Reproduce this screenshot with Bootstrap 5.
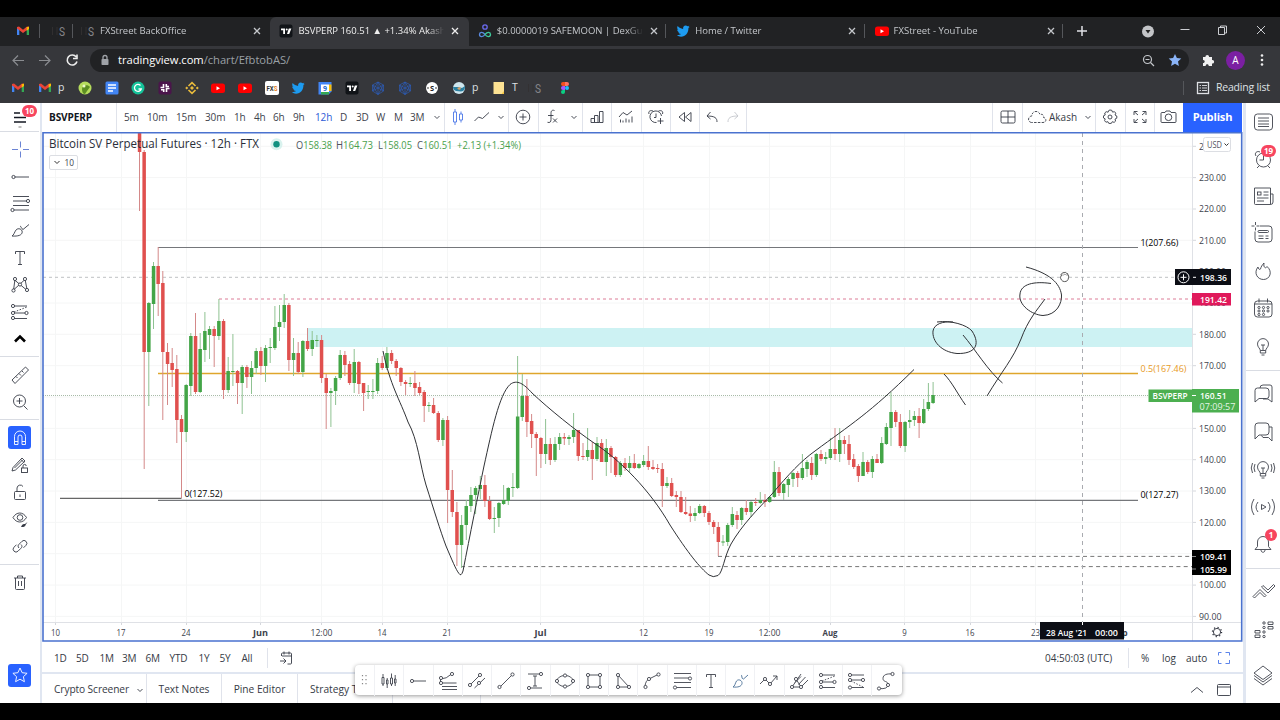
<!DOCTYPE html>
<html lang="en">

<head>
  <meta charset="UTF-8">
  <meta name="viewport" content="width=device-width, initial-scale=1">
  <title>BSVPERP 160.51 ▲ +1.34% Akash</title>
  <link href="https://cdn.jsdelivr.net/npm/bootstrap@5.3.3/dist/css/bootstrap.min.css" rel="stylesheet">
  <style>
    body {
      width: 1280px;
      height: 720px;
      background: #000;
      font-family: "Open Sans", "Noto Sans", sans-serif;
      font-size: 10px;
      line-height: 1.2;
      color: #2a2e39;
    }

    svg { display: block; flex: none; }
    .ic { width: 24px; height: 24px; fill: none; stroke: currentColor; stroke-width: .9; }
    .cell { flex: none; display: flex; align-items: center; white-space: nowrap; }

    /* browser */
    .browser { height: 103px; padding-top: 17px; color: #dfe1e5; }
    .tabs { height: 29px; background: #212224; font-size: 9.5px; padding-bottom: 1px; }
    .tab-item { width: 198.4px; height: 29px; padding: 0 0 1px 4px; position: relative; top: .5px; color: #c4c7cb; }
    .tab-item.on { background: #36373b; border-radius: 6px 6px 0 0; color: #eee; }
    .tab-item:nth-child(n+3)::after { content: ""; position: absolute; right: 1px; top: 7px; width: 1px; height: 14px; background: #55575b; }
    .tab-name { width: 146px; overflow: hidden; white-space: nowrap; }
    .fade-end { -webkit-mask-image: linear-gradient(90deg, #000 130px, transparent 146px); }
    .tabsep { width: 1px; height: 14px; background: #55575b; }
    .addr { height: 28px; background: #36373b; }
    .pill { height: 23px; width: 1099px; border-radius: 12px; background: #212224; font-size: 11.2px; color: #9aa0a6; }
    .marks { height: 29px; background: #36373b; font-size: 10.5px; padding-bottom: 2px; }
    .avatar { width: 19px; height: 19px; border-radius: 50%; background: #7b1fa2; color: #fff; font-size: 10px; }

    /* app */
    .app { height: 600px; background: #e0e6f1; color: #363a45; }
    .tools { width: 40px; padding-right: 1px; background: #fff; }
    .sq { width: 23px; height: 23px; border-radius: 3px; background: #2962ff; color: #fff; }
    .rule { height: 1px; background: #d9dce3; }
    .middle { width: 1201px; margin-left: 2px; }
    .head { height: 29px; background: #fff; }
    .head .cell, .head .times, .head .symbol { padding-bottom: 1px; }
    .bl { border-left: 1px solid #e0e3eb; }
    .br { border-right: 1px solid #e0e3eb; }
    .times { font-size: 10px; letter-spacing: -.15px; color: #40434d; }
    .symbol { width: 75px; padding-left: 7px; font-size: 10.1px; font-weight: 700; color: #131722; letter-spacing: -.15px; }
    .publish { width: 59px; background: #2962ff; color: #fff; font-weight: 700; font-size: 11.1px; letter-spacing: -.2px; padding-bottom: 2px; }
    .times .blue { color: #2d5bd6; }
    .bar { height: 30px; padding-top: 2px; background: #fff; }
    .foot { height: 29px; margin-top: 2px; background: #fff; font-size: 10.2px; white-space: nowrap; }
    .foot > div { padding-top: 2px; }
    .right-tools { width: 34px; margin-left: 3px; background: #fff; color: #40434d; }
    .right-tools .rule { margin: 5px 0; }
    .pin { position: absolute; background: #f7455f; color: #fff; border-radius: 8px; font-size: 8px; font-weight: 700; line-height: 12px; height: 12px; text-align: center; }
    .floating { position: absolute; left: 355px; top: 665px; width: 547px; height: 30px; background: #fff; border-radius: 4px; box-shadow: 0 1px 4px rgba(0, 0, 0, .4); color: #40434d; }
    .floating .cell { height: 31px; width: 29.25px; justify-content: center; border-left: 1px solid #f0f1f4; }
  </style>
</head>

<body class="overflow-hidden position-relative">

  <div class="browser">
    <div class="tabs d-flex align-items-center">
      <div class="cell" style="width:39px;padding-left:11px"><svg data-i="gmail"></svg></div>
      <div class="tabsep"></div>
      <div class="cell" style="width:32px;padding-left:7px"><svg data-i="fxs"></svg></div>
      <div class="tabsep"></div>
      <div id="tabList" class="d-flex" style="margin-left:-1px"></div>
      <div class="cell"><svg data-i="plus" style="margin-left:6px"></svg></div>
      <div class="cell ms-auto" style="width:144px"><svg data-i="tabsearch"></svg><svg data-i="minimize" style="margin-left:13px"></svg><svg data-i="maximize" style="margin:0 14px"></svg><svg data-i="closewin"></svg></div>
    </div>
    <div class="addr d-flex align-items-center">
      <div class="cell" style="width:90px;padding-left:6px"><svg data-i="back"></svg><svg data-i="forward" style="margin-left:3px"></svg><svg data-i="reload" style="margin-left:3px"></svg></div>
      <div class="pill d-flex align-items-center">
        <svg data-i="padlock" style="margin-left:3px"></svg>
        <div class="ms-auto order-2 d-flex" style="margin-right:2px"><svg data-i="zoomout"></svg><svg data-i="star" style="margin-left:3px"></svg></div>
        <div style="margin-left:1px;letter-spacing:-.03px"><span class="text-white">tradingview.com</span>/chart/EfbtobAS/</div>
      </div>
      <svg data-i="puzzle" style="margin-left:7px"></svg>
      <div class="avatar d-flex align-items-center justify-content-center" style="margin-left:6px">A</div>
      <svg data-i="kebab" style="margin-left:5px"></svg>
    </div>
    <div class="marks d-flex align-items-center">
      <div id="bookmarks" class="d-flex align-items-center" style="padding-left:6px"></div>
      <div class="tabsep ms-auto me-2"></div>
      <svg data-i="reading" style="margin-left:-1px"></svg>
      <div style="width:65px;letter-spacing:-.2px;padding-left:1px">Reading list</div>
    </div>
  </div>

  <div class="app d-flex">
    <!-- drawing tools -->
    <div class="tools d-flex flex-column align-items-center position-relative">
      <div class="cell" style="height:28px"><svg data-i="menu"></svg></div>
      <div class="pin" style="left:22px;top:2px;width:15px">10</div>
      <div class="rule w-100" style="margin-bottom:4px"></div>
      <div id="leftTools" class="w-100"></div>
      <div class="sq d-flex align-items-center justify-content-center mt-auto" style="margin-bottom:16.5px"><svg data-i="staro"></svg></div>
    </div>

    <div class="middle d-flex flex-column">
      <div class="head d-flex">
        <div class="symbol br d-flex align-items-center">BSVPERP</div>
        <div class="times br d-flex align-items-center" style="width:328px;padding-left:7px"><div id="times" class="d-flex"></div><svg data-i="chev" style="margin-left:-9px"></svg></div>
        <div id="headIcons" class="d-flex"></div>
        <div id="headRight" class="d-flex ms-auto"></div>
        <div class="publish d-flex align-items-center justify-content-center">Publish</div>
        <div style="width:1px"></div>
      </div>

      <svg id="chart" width="1201" height="510" viewBox="42 132 1201 510"></svg>

      <div class="bar d-flex align-items-center">
        <div id="ranges" class="d-flex align-items-center" style="padding-left:12px;letter-spacing:-.2px"></div>
        <div class="bl d-flex align-items-center" style="height:20px;padding-left:6px;margin-left:3px"><svg data-i="goto"></svg></div>
        <div id="rangeRight" class="d-flex align-items-center ms-auto"></div>
      </div>

      <div class="foot d-flex">
        <div class="br d-flex align-items-center" style="width:105px;padding-left:12px"><span style="width:75px;letter-spacing:-.1px">Crypto Screener</span><svg data-i="chev" style="margin-left:-1px"></svg></div>
        <div class="br d-flex align-items-center justify-content-center" style="width:75px">Text Notes</div>
        <div class="br d-flex align-items-center justify-content-center" style="width:76px">Pine Editor</div>
        <div class="br d-flex align-items-center" style="width:95px;padding-left:12px">Strategy Tester</div>
        <div class="br" style="width:88px"></div>
        <div class="d-flex align-items-center ms-auto" style="padding-right:7px"><svg data-i="up"></svg><svg data-i="window" style="margin-left:3px"></svg></div>
      </div>
    </div>

    <div class="right-tools d-flex flex-column" id="rightTools"></div>
  </div>

  <div class="floating d-flex"><div style="width:19px" class="d-flex align-items-center justify-content-center"><svg data-i="grip"></svg></div><div id="favs" class="d-flex"></div></div>

  <script>
    // small ring used as the handle of drawing tools
    const o = (x, y) => `<circle cx="${x}" cy="${y}" r="1.6" fill="#fff"/>`;
    const bird = '<path fill="#1d9bf0" stroke="none" d="M6 16c2 0 3-.3 4-1-1.500 0-2.300-.8-2.600-1.700h1.200C7 13 6.200 12 6.200 10.500l1.200.3C6 9.700 5.900 8.300 6.700 7c1.500 1.700 3.200 2.700 5.400 2.900C11.800 7.800 13 6.500 14.600 6.500c.8 0 1.500.3 2 .8l1.700-.6-1 1.500 1.500-.4-1.400 1.500C17.500 14 14.500 17.700 10 17.700 8.500 17.700 7 17.200 6 16z"/>';
    const tube = '<rect x="5" y="7.500" width="14" height="9.500" rx="2.500" fill="#f00" stroke="none"/><path d="M10.500 10.200v4l3.500-2z" fill="#fff" stroke="none"/>';
    const tv = '<rect x="5.500" y="5.500" width="13" height="13" rx="2" fill="#111418" stroke="none"/><path fill="#fff" stroke="none" d="M7 9.500h4v5.500H9.200v-3.700H7zM14.800 9.500h2.600L15.200 15h-2.200z"/><circle cx="12.700" cy="10.500" r="1" fill="#fff" stroke="none"/>';
    const hex = '<path stroke="#2c5cb8" d="M12 6l5.500 3v6L12 18.500 6.500 15V9zM6.500 9l11 6m0-6l-11 6M12 6v12.500M12 6l-5.500 9M12 6l5.500 9M12 18.500L6.500 9M12 18.500L17.500 9" stroke-width=".7"/>';
    const bulb = '<path d="M9.300 16.500c0-2-2.800-3.200-2.800-6.400a5.500 5.500 0 0 1 11 0c0 3.200-2.800 4.400-2.800 6.400zM9.300 16.500v2.500h5.400v-2.500M10.500 21h3M12 16v-5m-2 0h4"/>';
    const brush = '<path d="M4 17c2-1 2.200-3.500 4-6 2-2.500 6.500-1 6.200 2.200-.3 3-4.200 4.300-10.200 3.800zM12 7c1 0 1.500 3 3 3.500l6-5"/>';
    const brush2 = '<path d="M5 18c2-1 2-3.500 3.500-6 2-2.500 6-.5 5.500 2.500S10 18.500 5 18zM13 6c1.500 0 0 4 2.500 4L20 6"/>';
    const tee = '<path d="M7.500 8V5.500h9V8M12 5.500v13M10 18.500h4"/>';
    const forecast = '<path d="M5 6h14M6 13h12M5 18.500h14"/><path d="M6 12l13-5" stroke-dasharray="1.500 1.500"/>' + o(5, 6) + o(5, 13) + o(18.500, 13) + o(5, 18);

    const icons = {
      gmail: '<g stroke="none"><path fill="#4285f4" d="M6 8.500h2.300V16H6z"/><path fill="#34a853" d="M15.700 8.500H18V16h-2.300z"/><path fill="#ea4335" d="M6 8l2-.5 4 3.200 4-3.200 2 .5v1.500l-6 4.500-6-4.500z"/><path fill="#fbbc04" d="M15.700 8.200L18 7.500V10l-2.300 1.700z"/></g>',
      fxs: '<text x="12" y="16.500" font-size="13" font-family="Roboto" textLength="6" lengthAdjust="spacingAndGlyphs" fill="#85868a" stroke="none">S</text><path d="M5.500 8v8M10 8v8" stroke="#333132"/>',
      tv, bird, tube, hex,
      safe: '<circle cx="12" cy="8" r="2.200" stroke="#6b6bf0" stroke-width="1.300"/><path stroke="#5a8ae0" stroke-width="1.300" d="M12 15.500c-2 3-5.500 2.500-5.500 0s3-3 5.500 0"/><path stroke="#3fc99a" stroke-width="1.300" d="M12 15.500c2 3 5.500 2.500 5.500 0s-3-3-5.500 0"/>',
      close: '<path d="M9 9l6 6m0-6l-6 6" stroke-width="1.300"/>',
      plus: '<path d="M12 7v10M7 12h10" stroke-width="1.500"/>',
      tabsearch: '<circle cx="12" cy="12.500" r="6" fill="#c3c5c8" stroke="none"/><path d="M9.500 11h5L12 14.500z" fill="#222" stroke="none"/>',
      minimize: '<path d="M7.500 10.500h9"/>',
      maximize: '<path d="M7.500 8.500h6v7h-6zM9.500 8.500v-1.500h6v7h-2"/>',
      closewin: '<path d="M8 7l8 8m0-8l-8 8"/>',
      back: '<path stroke="#8a8c90" d="M18 12.500H7m5-5l-5 5 5 5" stroke-width="1.200"/>',
      forward: '<path stroke="#8a8c90" d="M6 12.500h11m-5-5l5 5-5 5" stroke-width="1.200"/>',
      reload: '<path stroke="#eee" stroke-width="1.600" d="M16.200 9A5 5 0 1 0 17 13.500M17 6.500v4h-4"/>',
      padlock: '<rect x="8.500" y="11" width="7" height="6" rx=".8" fill="#a0a3a8" stroke="none"/><path stroke="#a0a3a8" stroke-width="1.300" d="M10 11V9.500a2 2 0 0 1 4 0V11"/>',
      zoomout: '<circle cx="11.500" cy="11.500" r="4" stroke="#c4c7cb" stroke-width="1.200"/><path stroke="#c4c7cb" stroke-width="1.200" d="M9.500 11.500h4m1 3l3.500 3.500"/>',
      star: '<path fill="#8ab4f8" stroke="none" d="M12 6l1.900 4.100 4.400.5-3.300 3 .9 4.400-3.900-2.200L8.100 18l.9-4.400-3.300-3 4.400-.5z"/>',
      puzzle: '<path fill="#f1f1f1" stroke="none" d="M7 9h2.500c-.5-2.800 4-2.800 3.500 0h3v3c2.800-.5 2.800 4 0 3.500V18h-3.300c.3-2.500-3.300-2.500-3 0H7v-3c2.300.2 2.300-3.200 0-3z"/>',
      kebab: '<g fill="#eee" stroke="none"><circle cx="12" cy="7.500" r="1.300"/><circle cx="12" cy="12" r="1.300"/><circle cx="12" cy="16.500" r="1.300"/></g>',
      reading: '<rect x="6.500" y="6.500" width="11" height="11" stroke-width="1.300"/><path d="M8.500 9.500h1.500m1 0h5M8.500 12h1.500m1 0h5M8.500 14.500h1.500m1 0h5"/>',
      frog: '<circle cx="12" cy="12" r="6.500" fill="#b5dc5c" stroke="none"/><path d="M9 13c0-4 6-5 8-2l-3 4-2 3c-2 0-3-2-3-5z" fill="#5c8e23" stroke="none"/><circle cx="11" cy="10" r="1.500" fill="#eaf7c5" stroke="none"/>',
      docs: '<rect x="5.500" y="5.500" width="13" height="13" rx="1.500" fill="#4285f4" stroke="none"/><path stroke="#fff" stroke-width="1.300" d="M8 9h8m-8 3h8m-8 3h5"/>',
      gram: '<circle cx="12" cy="12" r="6.500" fill="#15c39a" stroke="none"/><path stroke="#fff" stroke-width="1.300" d="M14.500 9.500a3.500 3.500 0 1 0 .8 3.500H12.500"/>',
      slack: '<rect x="5.500" y="5.500" width="13" height="13" rx="2" fill="#4a154b" stroke="none"/><path stroke="#fff" stroke-width="1.600" d="M10.500 8v3.500H7.500M13.500 16v-3.500h3M16 10.500h-2.700V8M8 13.700h2.700V16"/>',
      binance: '<path stroke="#e8ba3c" stroke-width="1.700" d="M8.500 10L12 6.700l3.500 3.300M8.500 14l3.500 3.300 3.500-3.300"/><path fill="#e8ba3c" stroke="none" d="M12 10l2 2-2 2-2-2zM6.700 10.500l1.500 1.500-1.500 1.500L5.200 12zM17.300 10.500l1.500 1.500-1.500 1.500-1.500-1.500z"/>',
      fxsq: '<rect x="5" y="5" width="14" height="14" rx="2" fill="#fff" stroke="none"/><text x="6.500" y="15" font-size="8" font-weight="700" font-family="Roboto" textLength="11" lengthAdjust="spacingAndGlyphs" fill="#333" stroke="none">FX<tspan fill="#e8821e">S</tspan></text>',
      cal: '<path d="M5.500 6h13v9.500l-3 3h-10z" fill="#4285f4" stroke="none"/><path d="M16 8.500h2.500V15H16z" fill="#fbbc04" stroke="none"/><path d="M8 16h8v2.500H8z" fill="#34a853" stroke="none"/><rect x="8" y="8.500" width="8" height="7.500" fill="#fff" stroke="none"/><text x="10" y="15" font-size="7" font-weight="700" fill="#1967d2" stroke="none">9</text>',
      coin: '<circle cx="12" cy="12" r="6" fill="#fff" stroke="none"/><text x="9.900" y="14.700" font-size="7.500" font-weight="700" fill="#222" stroke="none">S</text><path d="M7 12h2m6 0h2" stroke="#222"/>',
      globe: '<circle cx="12" cy="12" r="6" fill="#cfe6ee" stroke="none"/><path fill="#2a7fa0" stroke="none" d="M6 11h5l4 1 3-2c0 4-1 5-4 5.500L9 15c-2-1-3-2-3-4z"/><path fill="#d9a066" stroke="none" d="M10 12l3-1 1 2-2 1z"/>',
      note: '<path fill="#fde293" stroke="none" d="M6.500 6h10.500v12H6.500z"/><path fill="#f5c542" stroke="none" d="M14.500 18l2.500-3v3z"/>',
      figma: '<g stroke="none"><path d="M12 6v4h-2a2 2 0 0 1 0-4z" fill="#f24e1e"/><path d="M12 6h2a2 2 0 0 1 0 4h-2z" fill="#ff7262"/><path d="M12 10v4h-2a2 2 0 0 1 0-4z" fill="#a259ff"/><circle cx="14" cy="12" r="2" fill="#1abcfe"/><path d="M12 14v2a2 2 0 1 1-2-2z" fill="#0acf83"/></g>',

      menu: '<path stroke="#131722" stroke-width="1.300" d="M6 8h6M6 12.500h12M6 17h12"/><path d="M10.500 22h3" stroke="#aaa" stroke-width="1.500"/>',
      cross: '<path stroke="#5a76cf" d="M12.500 3.500v6m0 4v6M4 11.500h6m5 0h6"/>',
      hline: '<path d="M5 12h16"/>' + o(5.500, 12),
      fib: '<path d="M5 4.500h16M5 9h14M5 13.500h16M5 18h16"/>' + o(20, 9) + o(4.500, 18),
      brush, brush2, tee,
      tri: '<path d="M6 6.500l12 10M17 6.500L6 16.500M7 6l-1.500 11.500M17 6l2 10.500"/>' + o(7, 6) + o(17, 6) + o(12, 11.500) + o(5.500, 17.500) + o(19, 17),
      forecast,
      caret: '<path stroke="#000" stroke-width="2.600" d="M7 14.500l5-5 5 5"/>',
      ruler: '<path d="M4 17L17.500 4l3 3L7 20.500zM8 13.500l1.500 1.500M11 10.500l2 2M14 8l1.500 1.500"/>',
      zoomin: '<circle cx="11.500" cy="11" r="6"/><path d="M8.500 11h6m-3-3v6m4.500 2l3.500 3.500"/>',
      magnet: '<path d="M6.500 18.500v-8a5.500 5.500 0 0 1 11 0v8h-3.500v-7.500a2 2 0 0 0-4 0v7.500zM6.500 15.500h3.500m4 0h3.500"/>',
      penlock: '<path d="M5 14.500L14 5l3 3-9.500 9-3.500 1zM13 6.500l3 3M6.500 15l8-8"/><rect x="13.500" y="15" width="6" height="4.500" fill="#fff"/><path d="M15 15v-2a1.600 1.600 0 0 1 3.200 0"/>',
      lock: '<rect x="6.500" y="11.500" width="11" height="8" rx="1"/><path d="M9 11.500V8a3.300 3.300 0 0 1 6-1.500M12 14.500v2.500"/>',
      eye: '<path d="M5 10.500c3.500-6 10-6 13.500 0-3.500 6-10 6-13.500 0z"/><circle cx="12" cy="10.500" r="2.800"/><path fill="currentColor" stroke="none" d="M13 20c1-2.500 2-3.500 4-3l2.500-2-2 3c0 1.500-2 2.200-4.500 2z"/>',
      link: '<path d="M11 14c-1.500-1.500-1-2.700 0-3.700l3-3a2.800 2.800 0 0 1 4 4l-2.500 2.500M13 10.500c1.500 1.500 1 2.700 0 3.700l-3 3a2.800 2.800 0 0 1-4-4l2.500-2.500"/>',
      trash: '<path d="M6 8h12M7.500 8v10.500q0 1 1 1h7q1 0 1-1V8M9.500 8v-2h5v2M10.500 11v5m3-5v5"/>',
      staro: '<path stroke="#fff" d="M12 5l2.100 4.700 5 .6-3.700 3.400 1 5-4.400-2.500-4.400 2.500 1-5-3.700-3.400 5-.6z"/>',

      chev: '<path d="M9.500 11l2.500 2.500L14.500 11"/>',
      candles: '<path stroke="#4a76e8" d="M7.500 7h3v10h-3zM9 4v3m0 10v3M13.500 9h3v6h-3zM15 6.500V9m0 6v2.500"/>',
      line: '<path d="M4.500 16l4-4 4 1.500L19 7.500"/>',
      compare: '<circle cx="12" cy="12" r="6.800"/><path d="M12 8.500v7M8.500 12h7"/>',
      fx: '<path d="M14.500 5.500c-3-1-3.500 1-3.500 3v6c0 2.500-1 3.500-3.500 2.800M8 10.500h5.500M13 13.500l4 4m0-4l-4 4"/>',
      bars: '<path d="M6 17.500v-4h3.500v4zM9.500 17.500v-7H13v7zM14.500 17.500V6.500H18v11zM13 17.500h1.500"/>',
      indic: '<path d="M5 12l4-4.500 4 2.500 5-4M6.500 17.500v-3M9 17.500v-2M12 17.500v-4M15 17.500v-3M18 17.500v-6"/>',
      alarm: '<path d="M17.500 11a5.800 5.800 0 1 0-5 6.500M12 8.500v4h-2M5 9c-1-3 1.500-4 4-3M18.500 9c1-3-1.500-4-4-3M16.500 13v6m-3-3h6"/>',
      rewind: '<path d="M11.500 7.500v9L6 12zM18 7.500v9L12.500 12z"/>',
      undo: '<path d="M17 17c0-4-2-6-10-6m3.500-4L7 11l3.500 3"/>',
      redo: '<path stroke="#c4c6cc" d="M7 17c0-4 2-6 10-6m-3.500-4L17 11l-3.500 3"/>',
      layout: '<rect x="5" y="6" width="14" height="12" rx="1.500"/><path d="M12 6v12m-7-6h14"/>',
      cloud: '<path stroke-dasharray="2.500 1.300" d="M6.500 17.500c-4-.5-4-6 .3-6.500 0-5.500 7-6 8.200-1.500 3-1 4 1.500 3.500 3 3.500.5 3 5-.5 5z"/>',
      gear: '<path d="M12 5l1.800.3.700 1.800 2-.4 1.300 1.500-.8 1.800 1.800 1v2.200l-1.800.9.600 2-1.500 1.300-1.800-.7-1 1.700h-2.500l-.9-1.700-2 .5-1.300-1.500.6-1.800L5.500 13v-2.200l1.700-.8-.5-2L8.200 6.700l1.900.5.700-1.800z"/><circle cx="12" cy="12" r="2"/>',
      full: '<path d="M6 10V6.500h3.500M6.500 7l3.500 3M14.500 6.500H18V10M17.500 7L14 10M6 14v3.500h3.500M6.500 17l3.500-3M18 14v3.500h-3.500M17.500 17L14 14"/>',
      camera: '<path d="M4 8.500q0-1 1-1h3l1-1.500h4l1 1.500h4q1 0 1 1v8q0 1-1 1H5q-1 0-1-1z"/><circle cx="11.500" cy="12.300" r="3.300"/>',
      goto: '<path d="M7.500 10V8q0-1 1-1h8q1 0 1 1v9q0 1-1 1h-3M8 10h9.500M10 5.500v3m5-3v3M6 15h6m-2.500-2.500L12 15l-2.500 2.500"/>',
      snap: '<path stroke="#4a76e8" d="M6.500 9.500v-3h3m4 0h4v3m0 4.500v3.500h-4m-4 0h-3V14"/>',
      up: '<path d="M6 14.500l6-5 6 5"/>',
      window: '<rect x="5.500" y="6.500" width="13" height="11" rx="1"/><path d="M5.500 9h13"/>',

      list: '<rect x="3.500" y="4" width="18" height="16" rx="3"/><path d="M7 8h11M7 11h11M7 14h11M7 16.500h11"/>',
      clock: '<circle cx="12.500" cy="13" r="7"/><path d="M12.500 9v4h-4M5 9c-2-3 1-5.500 4-4M8 19l-2 2m11-2l2 2"/>',
      news: '<path d="M3.500 4h16v16.500h-15q-1 0-1-1zM19.500 10h2.500v8q0 2.500-2.500 2.500M12.500 8h5m-5 3h5M6 14h11.500M6 17h7"/><rect x="6.500" y="8" width="3.500" height="3"/>',
      data: '<path d="M9 4h9q3 0 3 3v10q0 3-3 3h-11q-3 0-3-3V9.500M4.500 0v3m0 2.500v3M.5 4h3m2 0h3M8 8.500h8.500q1 0 1 1t-1 1H8q-1 0-1-1t1-1zM7.500 14h5m2 0h3M7.500 16.500h5m2 0h3"/>',
      flame: '<path d="M7 8c0 2 2 3 2.500 2C10 8 11 6 13 4c-.5 3 0 4 1.500 5L16 7.500c6 5 3 13-3.500 13S2.500 13.500 7 8z"/>',
      calendar: '<rect x="3.500" y="4" width="17.500" height="16" rx="3"/><path d="M8 1.500v4M16.500 1.500v4M3.500 7h17.500"/><circle cx="8" cy="10.500" r="1.100"/><circle cx="12.500" cy="10.500" r="1.100"/><circle cx="17" cy="10.500" r="1.100"/><circle cx="8" cy="14" r="1.100"/><circle cx="12.500" cy="14" r="1.100"/><circle cx="17" cy="14" r="1.100"/><circle cx="8" cy="17.500" r="1.100"/><circle cx="12.500" cy="17.500" r="1.100"/>',
      bulb,
      chats: '<path d="M9 6q0-3 3-3h7q2 0 2 2v15l-4-3h-5M9 6h6q3 0 3 3v5q0 2.500-2.500 2.500H8L4 20V8.500q0-2.500 2.500-2.500z"/>',
      chat: '<path d="M4 19V6q0-3 3-3h8q3 0 3 3v6q0 3-3 3H8zM18 7h3v14l-3.500-3.500H12l-1.500-2"/>',
      waves: bulb + '<path d="M4 7q-2 4 0 8M1.500 6q-2.500 5 0 10M20 7q2 4 0 8M22.500 6q2.500 5 0 10"/>',
      stream: '<path d="M10.500 9.500v5l4.500-2.500zM7 7q-4 5 0 10M3 4q-5 8 0 16M17 7q4 5 0 10M21 4q5 8 0 16"/>',
      bell: '<path d="M4 17.500l2.500-3V10a5.500 5.500 0 0 1 11 0v4.500l2.500 3zM10 18c0 3 4 3 4 0"/>',
      zig: '<path d="M2 16.500l7-7 6 6-1.500 1.500L9 12.500 3.500 18zM10.500 7L12 5.500l5 4.500 5.500-5.500L24 6l-7 7z"/>',
      dots: '<path d="M4 12.500h5v2.500H4zM4 17h5v2.500H4zM17 4h5v2.500h-5zM17 8.500h5V11h-5z"/><circle cx="13" cy="5" r="1.200"/><circle cx="13" cy="9.500" r="1.200"/><circle cx="13" cy="14" r="1.200"/><circle cx="13" cy="18.500" r="1.200"/>',
      layers: '<path d="M12 3l9 7-9 6.500L3 10zM3 12.500l9 6.500 9-6.500M3 15.500L12 22l9-6.500"/>',

      grip: '<path stroke="#888" stroke-width="1.200" stroke-dasharray="1.200 2.800" d="M9.500 7v10M13 7v10"/>',
      f1: '<path d="M5 8.500h2V15H5zM6 5v3.500M6 15v2M9.500 11h1.500v4H9.500zM10.200 9v2m0 4v4M13.500 9h2v6h-2zM14.500 4.500V9m0 6v2M17.500 10h1.500v4h-1.500zM18.200 6v4m0 4v3"/>',
      f2: '<path d="M5 12h15"/>' + o(6, 12),
      f3: '<path d="M4.500 14h16M6 17.500h15M6 20.500h15M4.500 10q6 0 11-5M4.500 10v4"/>' + o(16, 5) + o(5, 9) + o(5, 14),
      f4: '<path d="M5 16L15 6M9.500 19L20 9"/>' + o(5, 16) + o(15, 6) + o(14, 14),
      f5: '<path d="M6 18L18 6"/>' + o(5.500, 18) + o(18.500, 5.500),
      f6: '<path d="M5 5h12M5 19h14M12 7v10M10 7h4m-4 10h4"/>' + o(18, 5) + o(6, 19),
      f7: '<ellipse cx="12" cy="12" rx="8" ry="5.500"/>' + o(4, 12) + o(20, 12) + o(12, 6.500) + o(12, 17.500),
      f8: '<path d="M6 6h12v12H6z"/>' + o(6, 6) + o(18, 6) + o(6, 18) + o(18, 18),
      f9: '<path d="M7 6v12h11z"/>' + o(7, 6) + o(7, 18) + o(18, 18),
      f10: '<path d="M5 18q0-7 6-9l8-4"/>' + o(5.500, 18) + o(9, 10) + o(18.500, 5.500),
      f11: '<path d="M4 4.500h17M4 9h15M4 13.500h17M5 18.500h16"/>' + o(20, 9.500) + o(5, 18.500),
      f12: tee,
      f13: '<g stroke="#4a6f96">' + brush2 + '</g>',
      f14: '<path d="M3 15l5-5 5 5 7-8m-4 0h4v4"/>' + o(8, 10) + o(13, 15),
      f15: '<path d="M5 18h9M5 18L14 5M9 10l5 8M8 13.500l6-6M11.500 15.500l7-7.500M14 18l7-7"/>' + o(5, 18) + o(9, 10) + o(14, 18),
      f16: forecast,
      f17: '<path d="M5 6h14M5 11h12M5 18.500h14"/><path d="M6 12l12 6" stroke-dasharray="1.500 1.500"/>' + o(5, 6) + o(5, 11) + o(18, 11) + o(5, 18.500),
      f18: '<path d="M5 19.500q9 1 9-4c0-4-5-2-5-6s4-5 9.500-4.500"/>' + o(5, 19.500) + o(18.500, 5) + o(14, 16)
    };

    const svg = (name, cls = '') => `<svg class="ic ${cls}" viewBox="0 0 24 24">${icons[name]}</svg>`;
    const fill = (id, html) => { document.getElementById(id).innerHTML = html; };

    // Static placeholders
    document.querySelectorAll('svg[data-i]').forEach(el => {
      el.classList.add('ic');
      el.setAttribute('viewBox', '0 0 24 24');
      el.innerHTML = icons[el.dataset.i];
    });

    // Browser tabs
    const tabs = [
      ['fxs', 'FXStreet BackOffice', ''], ['tv', 'BSVPERP 160.51 ▲ +1.34% Akash', 'on'],
      ['safe', '$0.0000019 SAFEMOON | DexGuru', ''], ['bird', 'Home / Twitter', ''], ['tube', 'FXStreet - YouTube', '']
    ];
    fill('tabList', tabs.map(([i, t, c]) => `<div class="tab-item ${c} d-flex align-items-center">${svg(i)}<div class="tab-name fade-end">${t}</div><div style="margin-left:-1px">${svg('close')}</div></div>`).join(''));

    // Bookmarks: [icon, cell width, label]
    const marks = [['gmail', 27], ['gmail', 40, 'p'], ['frog', 27], ['docs', 26], ['gram', 27], ['slack', 27], ['binance', 26], ['tube', 27], ['tube', 27], ['fxsq', 26],
      ['bird', 27], ['cal', 27], ['tv', 26], ['hex', 27], ['hex', 27], ['coin', 27], ['globe', 40, 'p'], ['note', 36, 'T'], ['fxs', 30], ['figma', 27]];
    fill('bookmarks', marks.map(([i, w, t]) => `<div class="cell" style="width:${w}px">${svg(i)}${t ? `<span class="ps-1" style="margin-left:-3px">${t}</span>` : ''}</div>`).join(''));

    const cells = list => list.map(([t, w, c]) => `<div class="cell ${c || ''}" style="width:${w}px">${t}</div>`).join('');
    fill('times', cells([['5m', 23], ['10m', 29], ['15m', 29], ['30m', 29], ['1h', 20], ['4h', 19], ['6h', 20], ['9h', 22], ['12h', 25, 'blue'], ['D', 16], ['3D', 20], ['W', 18], ['M', 16], ['3M', 24]]));
    fill('ranges', cells([['1D', 22], ['5D', 23.5], ['1M', 22.5], ['3M', 23.5], ['6M', 24], ['YTD', 29], ['1Y', 21], ['5Y', 22], ['All', 22.5]]));
    fill('rangeRight', cells([['04:50:03 (UTC)', 83], ['<span class="bl" style="height:20px"></span>', 13], ['%', 21], ['log', 24], ['auto', 26], [svg('snap'), 31]]));

    fill('headIcons', cells([['<span style="margin-left:1px">' + svg('candles') + '</span>' + svg('line') + '<span style="margin-left:-5px">' + svg('chev') + '</span>', 64, 'br'], [svg('compare'), 29.5, 'br justify-content-center'],
      ['<span style="margin:0 -2px 0 1px">' + svg('fx') + '</span>' + svg('chev'), 44, 'br'], [svg('bars'), 29, 'br justify-content-center'], [svg('indic'), 30, 'br justify-content-center'],
      [svg('alarm'), 29, 'br justify-content-center'], [svg('rewind'), 29, 'br justify-content-center'], [svg('undo') + '<span style="margin-left:-3px">' + svg('redo') + '</span>', 47, 'br']]));
    fill('headRight', cells([[svg('layout'), 30, 'bl justify-content-center'], ['<span style="margin-left:2px">' + svg('cloud') + '</span>Akash<span style="margin-left:-1px">' + svg('chev') + '</span>', 73, 'bl'], [svg('gear'), 29.5, 'bl justify-content-center'],
      [svg('full'), 29, 'bl justify-content-center'], [svg('camera'), 29.5, 'bl justify-content-center']]));

    // Drawing tools on the left, '-' is a separator
    const left = ['cross', 'hline', 'fib', 'brush', 'tee', 'tri', 'forecast', 'caret', '-', 'ruler', 'zoomin', '-', 'magnet', 'penlock', 'lock', 'eye', 'link', '-', 'trash'];
    fill('leftTools', left.map(n => n === '-' ? '<div class="rule my-1"></div>'
      : `<div class="cell justify-content-center" style="height:27.05px"><div class="${n === 'magnet' ? 'sq ' : ''}d-flex align-items-center justify-content-center">${svg(n)}</div></div>`).join(''));

    const right = ['list', 'clock', 'news', 'data', 'flame', 'calendar', 'bulb', '-', 'chats', 'chat', 'waves', 'stream', 'bell', '-', 'zig', 'dots', 'layers'];
    const pins = { clock: '<span class="pin" style="right:4px;top:5px;width:15px">19</span>', bell: '<span class="pin" style="right:3px;top:4px;width:12px">1</span>' };
    fill('rightTools', right.map(n => n === '-' ? '<div class="rule"></div>'
      : `<div class="cell justify-content-center position-relative${n === 'layers' ? ' mt-2' : ''}" style="height:37.4px">${svg(n, 'overflow-visible')}${pins[n] || ''}</div>`).join(''));

    fill('favs', Array.from({ length: 18 }, (_, k) => `<div class="cell">${svg('f' + (k + 1))}</div>`).join(''));

    // Candles: colour, high, body top, body bottom, low
    const candles = `r132,132,152,211 r150,152,352,469 g302,303,352,406 g262,266,304,329 r247,266,284,316 r271,283,352,420 r343,352,364,405 r348,363,370,387 r355,369,420,443 r415,419,432,498
      g384,385,432,442 g333,336,386,396 r313,336,392,394 g333,349,392,393 g312,331,350,362 g326,329,335,359 r326,329,336,367 g299,321,336,340 r319,321,390,399 g357,371,390,393
      g334,371,372,386 r370,371,383,404 g365,367,383,414 r365,367,377,388 g361,368,377,394 g348,351,368,374 r347,351,366,375 g345,348,366,382 g338,347,348,363 g306,327,348,350
      g305,322,327,341 g294,305,322,328 r303,305,360,371 g338,353,360,376 r342,353,372,374 g340,341,372,377 r328,341,349,351 g331,340,349,356 g335,340,341,347 r335,340,378,383
      r374,378,393,429 g388,391,393,427 g376,378,391,405 g350,355,378,380 r351,355,365,376 r361,364,383,385 g349,362,383,393 r361,362,384,394 r383,383,393,411 g385,391,392,399
      g379,391,392,399 g358,363,391,394 r356,363,368,370 g347,353,368,370 r350,353,361,364 r359,361,368,376 r367,368,382,386 r380,382,384,395 g377,383,384,387 r371,383,388,396
      r382,387,393,395 r390,392,406,422 g402,405,406,412 r398,405,413,414 r411,413,440,442 g418,420,440,446 r416,420,490,523 r470,490,512,517 r502,512,545,566 g515,525,545,568
      g500,506,525,540 g487,495,506,512 g486,488,495,514 g476,485,489,499 r475,485,501,507 r496,501,519,520 g507,518,519,533 g502,503,518,527 g485,500,504,505 g487,488,501,505
      g473,487,488,497 g356,416.5,488,489 g374,396,417,421 r379,396,422,437 r414,421,434,448 r432,434,438,476 r437,438,454,468 g419,444,454,464 r438,444,460,465 g437,444,460,462
      g433,437,444,450 r433,437,438.5,445 g435,437,439,445 g413,430,437,443 r430,430,456,461 r443,456,457,460 g428,450,457,461 r442,450,459,480 g437,443,459,461 r439,443,462,462
      g439,448,462,476 r446,448,457,473 r456,457,475,477 g461,463,475,477 r458,463,468,471 g456,463,468,472 r454,463,468,469 g463,464,468,469 g455,461,465,467 r446,461,467,470
      r460,467,469,470 r464,468,469,473 r463,469,486,507 g477,483,486,488 r478,483,496,497 r491,495,497,507 r491,497,512,513 r497,512,514,515 r506,513.5,516,522 g508,513,516,521
      g504,506,513,514 r505,506,513,517 r511,513,522,525 r520,522,527,534 r522,527,542,556 g535,541.5,542.5,546 g523,525,542,546 g507,514,525,527 r511,515,520,529 g507,508,520,525
      r500,508,512,515 g501,502,512,517 r498,502,503,506 g492,500,503,504 r494,500,502,507 g496,497,502,503 g461,472,497,498 r467,472,493,496 g483,484,493,500 g477,479,485,497
      g472,473,479,487 r471,473,478,487 g454,468,478,480 g460,462,469,477 r457,463,475,480 g453,454,475,477 r450,454,459,461 g452,457,459,464 g438,449,458,460 r428,449,454,460
      g428,440,454,462 r436,440,444,454 r435,444,460,465 r454,459,467,469 r464,466,476,482 g452,462,476,476 r460,462,472,474 g456,459,472,478 r454,459,463,463 g437,443,463,464
      g423,427,444,445 g392,412,428,446 r410,412,422,427 r414,422,446,448 g421,422,446,452 g410,420,422,428 g411,416,420,426 r408,416,423,438 g399,409,423,424 g383,402,409,411 g382,395,403,404`.trim().split(/\s+/);

    const text = (x, y, s, w, size = 9, extra = '') => `<text x="${x}" y="${y}" font-size="${size}" ${w ? `textLength="${w}" lengthAdjust="spacingAndGlyphs"` : ''} ${extra}>${s}</text>`;
    const timeAxis = [[55.5, '10', 9], [121, '17', 9], [186, '24', 9], [260.5, 'Jun', 15], [321.5, '12:00', 22], [382, '14', 9], [447, '21', 9], [540.5, 'Jul', 12], [643.5, '12', 9], [709, '19', 9],
      [769.5, '12:00', 22], [830, 'Aug', 15], [904.5, '9', 4.5], [970, '16', 9], [1035.5, '23', 9], [1120, 'Sep', 15]];
    // prices whose tick is under the last price and level labels
    const covered = [160, 110];

    let c = '<rect x="42" y="132" width="1201" height="510" fill="#fff"/>';
    // grid
    for (let p = 240; p >= 90; p -= 10) {
      const y = 146.3 + (240 - p) * 3.134;
      c += `<path d="M43 ${y.toFixed(1)}H1192" stroke="#f5f6f6"/><path d="M1192 ${y.toFixed(1)}h4" stroke="#d5d7dc"/>`;
      if (!covered.includes(p)) c += text(1199, y + 3.4, p === 240 ? '2' : p + '.00', p === 240 ? 4.7 : p < 100 ? 22.5 : 27, 9, 'fill="#40434d"');
    }
    timeAxis.forEach(([x, s, w]) => {
      c += `<path d="M${Math.floor(x)}.5 133V622" stroke="#f5f6f6"/><path d="M${Math.floor(x)}.5 622v3" stroke="#d5d7dc"/>`;
      c += text(x - w / 2, 635.5, s, w, 9, /[A-Z]/.test(s) ? 'fill="#40434d" font-weight="700"' : 'fill="#40434d"');
    });
    c += '<path d="M43 622.5H1241M1192.500 133V641" stroke="#dfe1e6" fill="none"/>';
    // zone and levels
    c += '<rect x="308" y="328" width="884" height="19" fill="#cdf2f3"/>';
    c += '<g fill="none"><path d="M158 247.500H1138" stroke="#75777b" stroke-width="1.200"/><path d="M158 373.500H1138" stroke="#dfa62c" stroke-width="1.300"/><path d="M158 500.300H1138" stroke="#75777b" stroke-width="1.200"/>';
    c += '<path d="M60 498.400H181.500" stroke="#666" stroke-width="1.200"/><path d="M43 395.500H1150" stroke="#a8bba8" stroke-dasharray="1 1"/>';
    c += '<path d="M43 277.300H1176" stroke="#bfc1c4" stroke-dasharray="3 3"/><path d="M219 299H1192" stroke="#dc7d97" stroke-dasharray="3 3"/>';
    c += '<path d="M718 556.400H1192M461 566.600H1192" stroke="#777" stroke-dasharray="4 3.300"/><path d="M1082.500 133V622" stroke="#a9abb0" stroke-dasharray="4 4"/></g>';
    // candles
    candles.forEach((s, i) => {
      const [h, t, b, l] = s.slice(1).split(',').map(Number);
      const x = 139.5 + i * 4.668, g = s[0] === 'g';
      c += `<path d="M${x.toFixed(1)} ${h}V${l}" stroke="${g ? '#8fc292' : '#d48989'}"/><rect x="${(x - 1.75).toFixed(1)}" y="${t}" width="3.500" height="${Math.max(1, b - t)}" fill="${g ? '#43a547' : '#e0504e'}"/>`;
    });
    // freehand strokes
    c += '<g fill="none" stroke="#303236"><path d="M383 351C390 385 400 400 408 422C418 440 420 465 426 485C434 510 440 530 446 546C452 560 456 570 459 573.500Q461 577 463 571C470 535 478 495 484 466C492 430 499 395 510 384.500C517 379 524 384 532 393C549 409 575 430 594 443C620 460 650 490 670 525C688 553 700 568 709 575Q713 578 718 575.500C723 572 724 557 731 544C742 525 757 510 772 494C789 474 801 461 815 451C850 425 870 413 914 369.500"/>';
    c += '<path d="M937 322C951 320 967 325 972 331C981 345 975 354 957 353.500C941 352 932 341 933 331C934 324 943 321 953 322"/><path d="M963 335C975 349 988 371 1002.500 383M944 374C952 382 957 393 965.500 405M987 396C1002 371 1013 359 1021 339C1028 320 1037 310 1045 299"/>';
    c += '<path d="M1051 283.500C1034 281 1021 284 1020 294C1018 305 1032 315 1043 315.500C1057 315 1062 303 1061.500 295C1060 283 1049 273 1026 267"/></g>';
    // grab cursor
    c += '<path d="M1061.500 276q-1.500-2 .5-2.200q.5-1.800 2-1q1.500-1 2.200.3q2 0 1.800 1.900q1.200.6.500 2.800c-.3 2.500-1.500 3.800-4 3.800-2.500 0-4-2.500-4-4.200q0-1.400 1-1.400zM1063 274.500v1m2-1.500v1m2-.5v1" fill="#fff" stroke="#444" stroke-width=".9"/>';
    // legend
    c += text(49, 148.4, 'Bitcoin SV Perpetual Futures · 12h · FTX', 210, 12.4, 'fill="#2a2e39"');
    c += '<circle cx="276.500" cy="144.300" r="6" fill="#d9f2ee"/><circle cx="276.500" cy="144.300" r="3.200" fill="#0f9180"/>';
    [[296, 'O', '158.38', 36], [336, 'H', '164.73', 37], [378, 'L', '158.05', 34], [417, 'C', '160.51', 35.5]].forEach(([x, k, v, w]) => {
      c += text(x, 149, `${k}<tspan fill="#4a9f4e">${v}</tspan>`, w, 10.3, 'fill="#50535e"');
    });
    c += text(457, 149, '+2.13 (+1.34%)', 64, 10.3, 'fill="#4a9f4e"');
    c += '<rect x="49.500" y="155.500" width="28" height="14" rx="1.500" fill="#fff" stroke="#dcdee3"/><path d="M54.500 161l2.500 2.500 2.500-2.500" fill="none" stroke="#333"/>' + text(64.5, 165.8, '10', 9.5, 9.5, 'fill="#40434d"');
    c += text(1140.5, 246, '1(207.66)', 38, 9) + text(1140.5, 371.8, '0.5(167.46)', 46, 9, 'fill="#e89a1e"') + text(1140.5, 497.8, '0(127.27)', 38, 9) + text(184.5, 497.3, '0(127.52)', 38, 9);
    // axis labels
    c += '<rect x="1203.500" y="137.500" width="27" height="14" rx="2" fill="#fff" stroke="#dcdee3"/><path d="M1224.500 143.500l2 2 2-2" fill="none" stroke="#333"/>' + text(1207, 147.8, 'USD', 15, 9, 'fill="#50535e"');
    c += '<rect x="1175" y="269" width="56" height="16" fill="#0c0e15"/><g stroke="#fff" fill="none"><circle cx="1183.500" cy="277.300" r="5.500"/><path d="M1180.500 277.300h6m-3-3v6M1193 277.300h3"/></g>' + text(1200, 280.8, '198.36', 27, 9, 'fill="#fff" font-weight="600"');
    c += '<rect x="1192" y="293" width="39" height="12.500" fill="#e0195b"/>' + text(1200, 302.6, '191.42', 27, 9, 'fill="#fff" font-weight="600"');
    c += '<rect x="1148.500" y="389.500" width="44" height="12.500" fill="#4caf50"/><rect x="1192" y="389" width="47" height="23.500" fill="#4caf50"/><path d="M1192 395.500h4" stroke="#fff"/>' + text(1152.5, 399.2, 'BSVPERP', 35, 9, 'fill="#fff" font-weight="600"') + text(1200, 399.2, '160.51', 26.5, 9, 'fill="#fff" font-weight="600"') + text(1199.5, 410, '07:09:57', 36, 9, 'fill="#e4f5e5"');
    c += '<rect x="1192" y="550" width="39" height="25" fill="#000"/><path d="M1192 556.500h4M1192 569h4" stroke="#888"/>' + text(1200, 560, '109.41', 27, 9, 'fill="#fff" font-weight="600"') + text(1200, 572.6, '105.99', 27, 9, 'fill="#fff" font-weight="600"');
    c += '<rect x="1040" y="622" width="84" height="17.500" fill="#0c0e15"/><path d="M1082.500 622v3" stroke="#fff"/>' + text(1046, 635.7, '28 Aug \'21', 41, 9, 'fill="#fff" font-weight="600"') + text(1095, 635.7, '00:00', 23, 9, 'fill="#fff" font-weight="600"');
    c += '<g fill="none" stroke="#2a2e39"><circle cx="1217" cy="632" r="3.600" stroke-width=".9"/><circle cx="1217" cy="632" r="4.600" stroke-width="1.200" stroke-dasharray="1.200 2.413"/></g>';
    // frame
    c += '<path d="M43 132.800H1241.700V641H43z" fill="none" stroke="#4a72cf" stroke-width="1.600"/>';
    const chart = document.getElementById('chart');
    chart.setAttribute('font-family', '"Open Sans", sans-serif');
    chart.innerHTML = c;
  </script>

  <script src="https://cdn.jsdelivr.net/npm/bootstrap@5.3.3/dist/js/bootstrap.bundle.min.js"></script>
</body>

</html>
